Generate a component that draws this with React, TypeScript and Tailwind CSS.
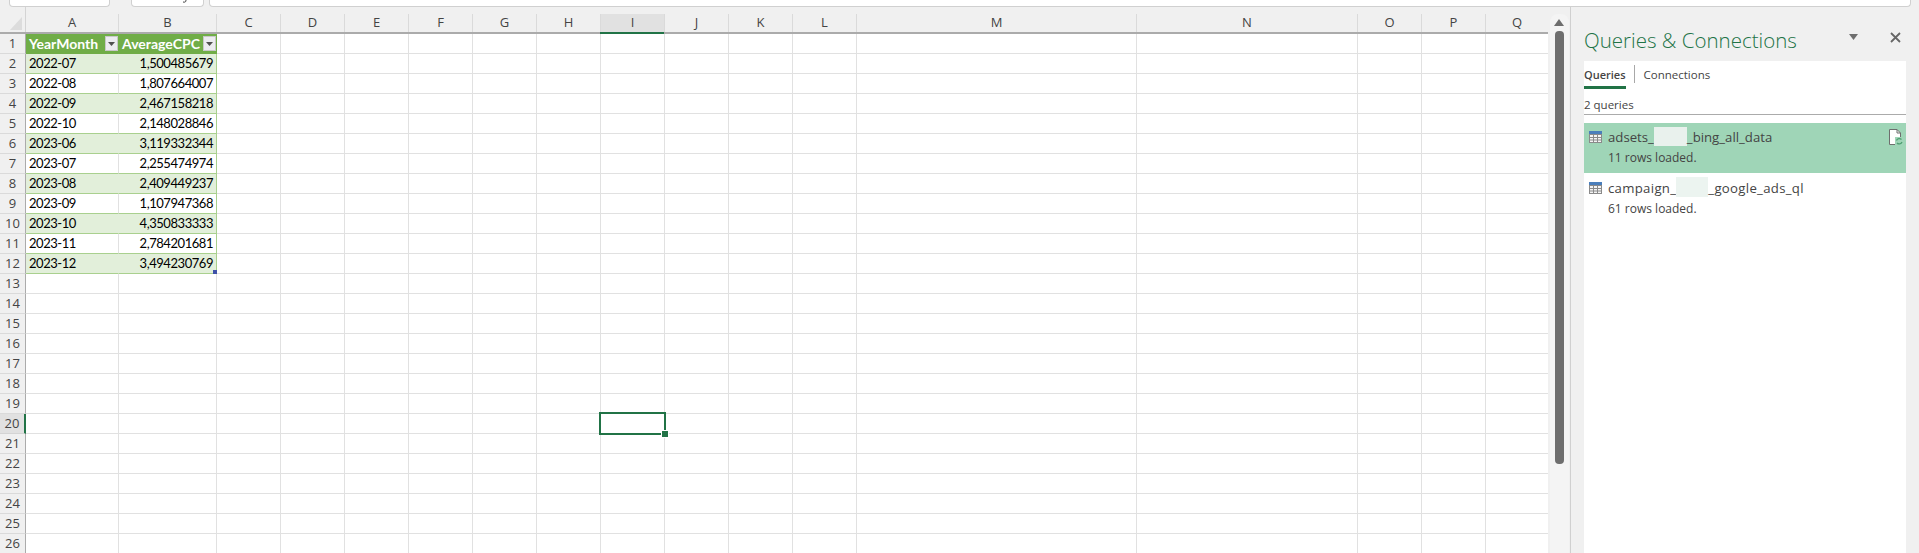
import { Fragment } from 'react';

const columns = [
  { name: 'A', width: 'w-[93px]' },
  { name: 'B', width: 'w-[98px]' },
  { name: 'C', width: 'w-[64px]' },
  { name: 'D', width: 'w-[64px]' },
  { name: 'E', width: 'w-[64px]' },
  { name: 'F', width: 'w-[64px]' },
  { name: 'G', width: 'w-[64px]' },
  { name: 'H', width: 'w-[64px]' },
  { name: 'I', width: 'w-[64px]' },
  { name: 'J', width: 'w-[64px]' },
  { name: 'K', width: 'w-[64px]' },
  { name: 'L', width: 'w-[64px]' },
  { name: 'M', width: 'w-[280px]' },
  { name: 'N', width: 'w-[221px]' },
  { name: 'O', width: 'w-[64px]' },
  { name: 'P', width: 'w-[64px]' },
  { name: 'Q', width: 'w-[63px]' },
];

const tableRows = [
  ['2022-07', '1,500485679'],
  ['2022-08', '1,807664007'],
  ['2022-09', '2,467158218'],
  ['2022-10', '2,148028846'],
  ['2023-06', '3,119332344'],
  ['2023-07', '2,255474974'],
  ['2023-08', '2,409449237'],
  ['2023-09', '1,107947368'],
  ['2023-10', '4,350833333'],
  ['2023-11', '2,784201681'],
  ['2023-12', '3,494230769'],
];

const rowNumbers = Array.from({ length: 26 }, (_, i) => i + 1);

const FilterButton = () => (
  <span className="ml-auto flex h-[15px] w-[13px] shrink-0 items-center justify-center border border-[#c8c8c8] bg-[#ececf0]">
    <svg width="7" height="4" viewBox="0 0 7 4">
      <path d="M0 0h7L3.5 4z" fill="#505050" />
    </svg>
  </span>
);

const TableIcon = () => (
  <svg width="13" height="12" viewBox="0 0 13 12" className="shrink-0">
    <rect x="0" y="0" width="13" height="12" fill="#8a8a8a" />
    <rect x="0" y="0" width="13" height="3" fill="#4a7ebb" />
    <path
      d="M1 4h3v2H1zM5 4h3v2H5zM9 4h3v2H9zM1 7h3v1.500H1zM5 7h3v1.500H5zM9 7h3v1.500H9zM1 9.500h3V11H1zM5 9.500h3V11H5zM9 9.500h3V11H9z"
      fill="#f4f4f4"
    />
  </svg>
);

const RefreshFileIcon = () => (
  <svg width="14" height="16" viewBox="0 0 14 16" className="shrink-0">
    <path d="M.5.500h7.500l3.500 3.500v11.500H.5z" fill="#ffffff" stroke="#6e6e6e" />
    <path d="M8 .5V4h3.500" fill="none" stroke="#6e6e6e" />
    <rect x="6" y="8" width="8" height="8" fill="#9fd5b7" />
    <path
      d="M7.500 11.500a3 3 0 0 1 5-1M13 13a3 3 0 0 1-5 1"
      fill="none"
      stroke="#4f9e72"
      strokeWidth="1.300"
    />
  </svg>
);

const Cell = ({ col, row }: { col: number; row: number }) => {
  const name = columns[col].name;
  const inTable = col < 2 && row <= 12;
  const banded = inTable && row > 1 && row % 2 === 0;

  let bg = '';
  let border = 'border-r border-b border-[#e1e1e1]';
  if (inTable && row === 1) {
    bg = 'bg-[#70ad47] text-white font-bold text-[14px]';
    border = 'border-b border-[#70ad47]';
  } else if (inTable) {
    bg = banded ? 'bg-[#e2efda]' : 'bg-white';
    if (col === 1) border = 'border-b border-r border-[#a9d08e]';
    else if (banded) border = 'border-b border-r border-b-[#a9d08e] border-r-[#e2efda]';
    else border = 'border-b border-r border-b-[#a9d08e] border-r-[#e1e1e1]';
  }

  return (
    <div
      className={`relative flex h-[20px] shrink-0 items-center overflow-visible whitespace-nowrap text-[13px] text-black ${columns[col].width} ${bg} ${border} ${inTable && row === 1 ? 'pl-[3px] pr-[1px]' : 'px-[3px]'} ${inTable && col === 1 && row > 1 ? 'justify-end' : ''}`}
    >
      {inTable && row === 1 && (
        <>
          <span>{col === 0 ? 'YearMonth' : 'AverageCPC'}</span>
          <FilterButton />
        </>
      )}
      {inTable && row > 1 && <span className="tracking-[-0.45px]">{tableRows[row - 2][col]}</span>}
      {row === 12 && col === 1 && (
        <span className="absolute bottom-[-1px] right-[-1px] h-[4px] w-[4px] bg-[#3f51a8]" />
      )}
      {name === 'I' && row === 20 && (
        <span className="absolute left-[-2px] top-[-2px] z-10 h-[23px] w-[67px] border-2 border-[#217346]">
          <span className="absolute bottom-[-4px] right-[-4px] h-[6px] w-[6px] bg-[#217346] outline outline-1 outline-white" />
        </span>
      )}
    </div>
  );
};

export default function App() {
  return (
    <div className="flex h-[553px] w-[1919px] flex-col overflow-hidden bg-white font-['Lato',sans-serif]">
      {/* Formula bar remains */}
      <div className="flex h-[7px] shrink-0 bg-[#f0f0f0]">
        <div className="ml-[9px] h-[7px] w-[101px] rounded-b-[4px] border border-t-0 border-[#d0d0d0] bg-white" />
        <div className="relative ml-[21px] h-[7px] w-[73px] rounded-b-[4px] border border-t-0 border-[#d0d0d0] bg-white">
          <svg width="6" height="3" viewBox="0 0 6 3" className="absolute left-[50px] top-0">
            <path d="M4 0c0 2-1 2.500-3 2" fill="none" stroke="#444444" />
          </svg>
        </div>
        <div className="ml-[5px] h-[7px] w-[1702px] rounded-b-[4px] border border-t-0 border-[#d0d0d0] bg-white" />
      </div>

      <div className="flex min-h-0 flex-1">
        {/* Sheet */}
        <div className="w-[1548px] shrink-0 overflow-hidden">
          <div className="flex h-[27px] border-b-2 border-[#ababab] bg-[#f0f0f0]">
            <div className="relative h-[25px] w-[26px] shrink-0 border-r border-[#d4d4d4]">
              <svg width="12" height="13" viewBox="0 0 12 13" className="absolute bottom-[2px] right-[3px]">
                <path d="M12 0v13H0z" fill="#dcdcdc" />
              </svg>
            </div>
            {columns.map((c) => (
              <div
                key={c.name}
                className={`mt-[7px] flex h-[18px] shrink-0 items-center justify-center border-r border-[#dadada] pb-[1px] font-['Open_Sans',sans-serif] text-[13px] text-[#444444] ${c.width} ${c.name === 'I' ? 'bg-[#e1e1e1]' : ''}`}
              >
                {c.name}
              </div>
            ))}
          </div>
          {/* Selected column marker */}
          <div className="relative">
            <div className="absolute left-[600px] top-[-2px] h-[2px] w-[64px] bg-[#217346]" />
          </div>
          {rowNumbers.map((row) => (
            <div key={row} className="flex">
              <div
                className={`flex h-[20px] w-[26px] shrink-0 items-center justify-center border-b font-['Open_Sans',sans-serif] text-[13px] text-[#444444] ${row === 20 ? 'border-r-2 border-b-[#d4d4d4] border-r-[#217346] bg-[#e1e1e1]' : 'border-r border-b-[#dadada] border-r-[#ababab] bg-[#f0f0f0]'}`}
              >
                {row}
              </div>
              {columns.map((_, col) => (
                <Fragment key={col}>
                  <Cell col={col} row={row} />
                </Fragment>
              ))}
            </div>
          ))}
        </div>

        {/* Vertical scrollbar */}
        <div className="flex w-[23px] shrink-0 flex-col items-center border-r border-[#d0d0d0] bg-[#f0f0f0]">
          <div className="mt-[7px] flex w-[19px] flex-1 flex-col items-center rounded-t-[8px] bg-[#f4f4f4]">
            <svg width="10" height="7" viewBox="0 0 10 7" className="mt-[5px]">
              <path d="M5 0l5 7H0z" fill="#6e6e6e" />
            </svg>
            <div className="mt-[5px] h-[433px] w-[9px] rounded-[4px] bg-[#6e6e6e]" />
          </div>
        </div>

        {/* Queries & Connections pane */}
        <div className="flex min-w-0 flex-1 flex-col bg-[#f0f0f0] pl-[13px] pr-[13px] font-['Open_Sans',sans-serif]">
          <div className="flex h-[54px] shrink-0 items-center">
            <h2 className="pt-[12px] text-[20.500px] font-light text-[#217346]">Queries &amp; Connections</h2>
            <svg width="9" height="6" viewBox="0 0 9 6" className="ml-auto mr-[32px] mt-[6px]">
              <path d="M0 0h9L4.500 6z" fill="#6e6e6e" />
            </svg>
            <svg width="11" height="11" viewBox="0 0 11 11" className="mr-[5px] mt-[6px]">
              <path d="M1 1l9 9M10 1l-9 9" stroke="#666666" strokeWidth="1.800" />
            </svg>
          </div>
          <div className="flex flex-1 flex-col bg-white text-[#444444]">
            <div className="flex h-[28px] shrink-0 items-start pt-[4px] text-[11px]">
              <div className="flex h-[24px] flex-col">
                <span className="font-semibold leading-[20px]">Queries</span>
                <span className="mt-[1px] h-[3px] w-full bg-[#217346]" />
              </div>
              <span className="ml-[8px] h-[18px] w-px bg-[#a8a8a8]" />
              <span className="ml-[9px] text-[11.500px] leading-[20px]">Connections</span>
            </div>
            <div className="h-[26px] shrink-0 border-b border-[#ababab] pt-[8px] text-[11.500px] leading-[16px]">2 queries</div>
            <div className="h-[8px] shrink-0" />
            <div className="flex h-[50px] shrink-0 flex-col bg-[#9fd5b7] pl-[5px] pr-[3px] pt-[5px]">
              <div className="flex items-center">
                <TableIcon />
                <span className="ml-[6px] flex items-center text-[13.200px] leading-[18px]">
                  adsets_<span className="-mt-[1px] inline-block h-[19px] w-[33px] bg-[#e9f1ed]" />_bing_all_data
                </span>
                <span className="ml-auto">
                  <RefreshFileIcon />
                </span>
              </div>
              <span className="ml-[19px] mt-[3px] text-[12px] leading-[18px]">11 rows loaded.</span>
            </div>
            <div className="flex flex-col pl-[5px] pt-[5px]">
              <div className="flex items-center">
                <TableIcon />
                <span className="ml-[6px] flex items-center text-[13.200px] leading-[18px] tracking-[0.3px]">
                  campaign_<span className="-mt-[1px] inline-block h-[20px] w-[32px] bg-[#ecf4f0]" />_google_ads_ql
                </span>
              </div>
              <span className="ml-[19px] mt-[3px] text-[12px] leading-[18px]">61 rows loaded.</span>
            </div>
          </div>
        </div>
      </div>
    </div>
  );
}
